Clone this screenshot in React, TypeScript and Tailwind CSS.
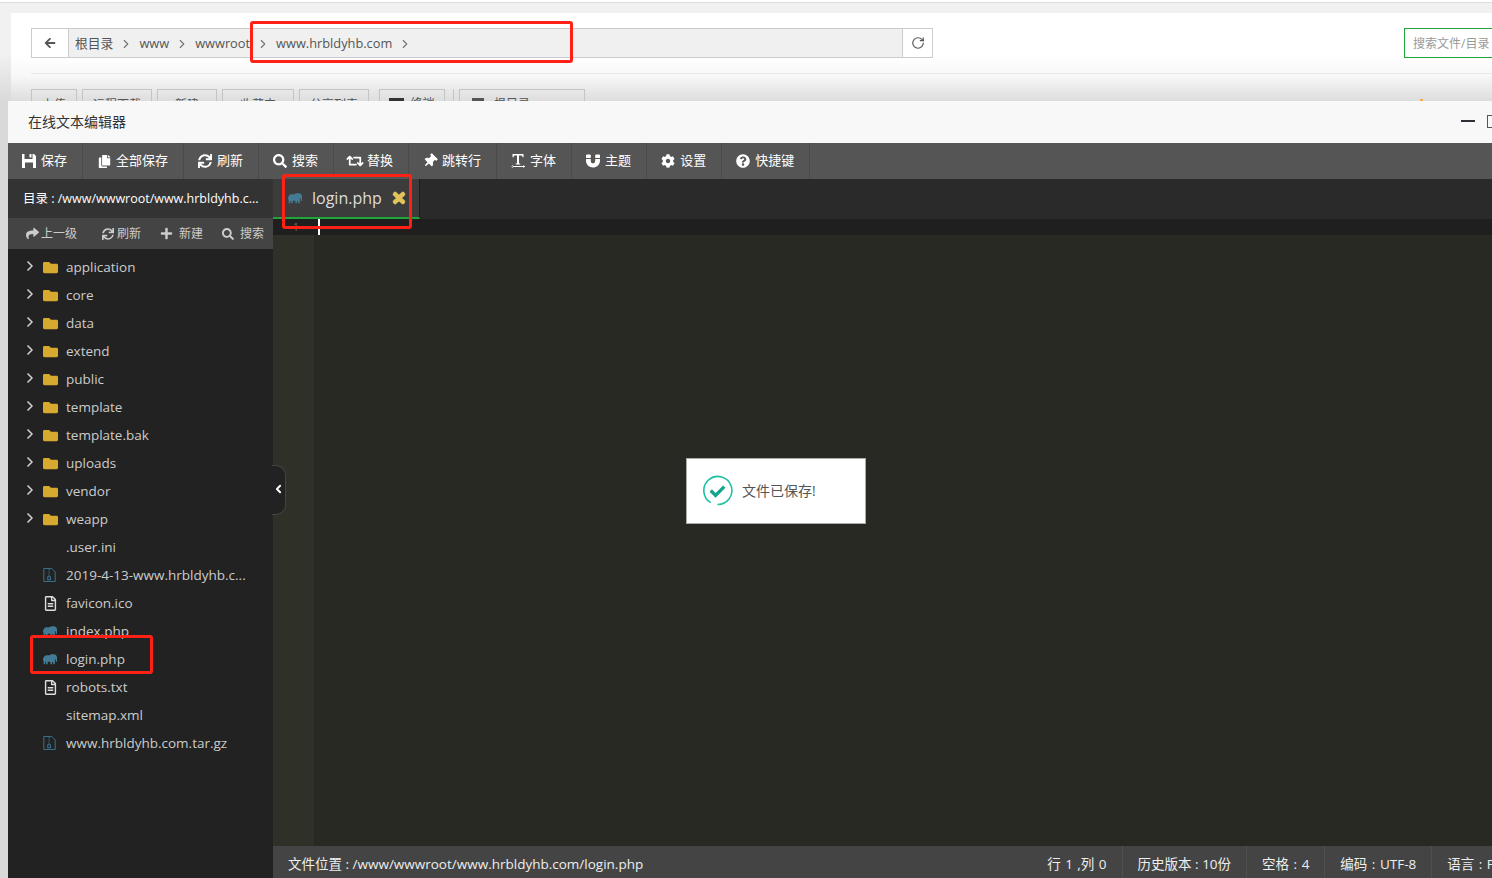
import { ChevronLeft, ChevronRight, RotateCw } from 'lucide-react';
import type { ReactNode } from 'react';
import {
    FaArrowLeft,
    FaCog,
    FaCopy,
    FaFolder,
    FaMagnet,
    FaPlus,
    FaQuestionCircle,
    FaRegFileAlt,
    FaRetweet,
    FaSearch,
    FaShare,
    FaSync,
    FaThumbtack,
    FaTimes,
} from 'react-icons/fa';

const Elephant = ({ className }: { className?: string }) => (
    <svg viewBox="0 0 16 12" className={className} fill="#437a95">
        <path d="M1 3.4C1.2 1.8 2.6 1 4 1h3.6C8.2.4 9 0 10 0h2.4C14.4 0 16 1.6 16 3.6v4.2c0 .7-.3 1.1-.8 1.1-.4 0-.7-.4-.7-1V5.8h-.9v5.7h-1.9V9h-1.4v2.5H8.4V8.6H5.4v2.9H3.5V8.8h-.9v2.7H.7V6.4L0 8V5.4c0-.9.4-1.6 1-2z" />
    </svg>
);

const ZipFile = () => (
    <svg viewBox="0 0 14 16" className="h-[14px] w-[13px]" fill="none" stroke="#3f7f9c" strokeWidth="1">
        <path d="M.5.5h9l4 4v11H.5z" />
        <path d="M6.5 1v2M6.5 4v2M6.5 7v2" />
        <rect x="5" y="10" width="3" height="3.5" />
    </svg>
);

const Floppy = () => (
    <svg viewBox="0 0 14 14" className="size-[14px]" fill="currentColor">
        <path d="M0 0h2.5v5h8V0H12l2 2v12H0zM3 14h8V8.5H3zM7.5 0h2v3.5h-2z" fillRule="evenodd" />
    </svg>
);

const TextSize = () => (
    <svg viewBox="0 0 14 14" className="size-[14px]" fill="currentColor">
        <path d="M1.5 0h11v3.2h-1L11 1.5H8v8h1.2v1H4.8v-1H6v-8H3l-.5 1.7h-1z" />
        <path d="M0 12h14v.9H0zM1.8 11l-1.8 1.45 1.8 1.45zM12.2 11l1.8 1.45-1.8 1.45z" />
    </svg>
);

const tools: { icon: ReactNode; label: string }[] = [
    { icon: <Floppy />, label: '保存' },
    { icon: <FaCopy />, label: '全部保存' },
    { icon: <FaSync className="text-[14px]" />, label: '刷新' },
    { icon: <FaSearch className="text-[14px]" />, label: '搜索' },
    { icon: <FaRetweet className="scale-125 text-[14px]" />, label: '替换' },
    { icon: <FaThumbtack className="rotate-45 text-[14px]" />, label: '跳转行' },
    { icon: <TextSize />, label: '字体' },
    { icon: <FaMagnet className="text-[14px]" />, label: '主题' },
    { icon: <FaCog className="text-[14px]" />, label: '设置' },
    { icon: <FaQuestionCircle className="text-[14px]" />, label: '快捷键' },
];

const folders = ['application', 'core', 'data', 'extend', 'public', 'template', 'template.bak', 'uploads', 'vendor', 'weapp'];

const files: { name: string; icon?: ReactNode }[] = [
    { name: '.user.ini' },
    { name: '2019-4-13-www.hrbldyhb.c...', icon: <ZipFile /> },
    { name: 'favicon.ico', icon: <FaRegFileAlt className="text-[15px] text-[#ddd]" /> },
    { name: 'index.php', icon: <Elephant className="h-[11px] w-[14px]" /> },
    { name: 'login.php', icon: <Elephant className="h-[11px] w-[14px]" /> },
    { name: 'robots.txt', icon: <FaRegFileAlt className="text-[15px] text-[#ddd]" /> },
    { name: 'sitemap.xml' },
    { name: 'www.hrbldyhb.com.tar.gz', icon: <ZipFile /> },
];

const crumbs = ['根目录', 'www', 'wwwroot', 'www.hrbldyhb.com'];
const pageButtons = [
    { label: '上传', w: 'w-[46px]' },
    { label: '远程下载', w: 'w-[70px]' },
    { label: '新建', w: 'w-[60px]' },
    { label: '收藏夹', w: 'w-[72px]' },
    { label: '分享列表', w: 'w-[70px]' },
];
const statusItems = [
    { label: '行 1 ,列 0', spacing: '[word-spacing:1px]' },
    { label: '历史版本 : 10份', spacing: '' },
    { label: '空格 : 4', spacing: '[word-spacing:1px]' },
    { label: '编码 : UTF-8', spacing: '[word-spacing:1px]' },
    { label: '语言 : PHP', spacing: '[word-spacing:1px]' },
];

export default function App() {
    return (
        <div className="relative h-[878px] w-[1492px] overflow-hidden bg-[#d9d9d9] font-['Open_Sans','Noto_Sans_CJK_SC',sans-serif]">
            <div className="h-[133px] bg-[linear-gradient(to_bottom,#f1f1f1_0%,#f1f1f1_40%,#d9d9d9_76%)]">
                <div className="h-[3px] border-b border-[#ddd] bg-white" />
                <div className="ml-[11px] mt-[10px] h-[120px] bg-[linear-gradient(to_bottom,#ffffff_0%,#ffffff_35%,#f8f8f8_52%,#dcdcdc_74%)] pl-[20px]">
                    <div className="flex items-start pt-[15px]">
                        <div className="flex h-[30px] w-[902px] shrink-0 border border-[#ccc] bg-[#f0f0f0]">
                            <div className="flex w-[37px] items-center justify-center border-r border-[#ccc] bg-white text-[12px] text-[#555]">
                                <FaArrowLeft />
                            </div>
                            <div className="flex flex-1 items-center pl-[6px] pt-px text-[12.8px] text-[#555]">
                                {crumbs.map((crumb) => (
                                    <span key={crumb} className="flex items-center">
                                        {crumb}
                                        <ChevronRight className="mx-[6px] size-[14px] text-[#777]" />
                                    </span>
                                ))}
                            </div>
                            <div className="flex w-[30px] items-center justify-center border-l border-[#ccc] bg-white text-[#555]">
                                <RotateCw className="size-[14px]" />
                            </div>
                        </div>
                        <div className="ml-[471px] flex h-[30px] w-[110px] shrink-0 items-center border border-[#20a53a] bg-white pl-[8px] pt-px text-[12px] text-[#999]">
                            搜索文件/目录
                        </div>
                    </div>
                    <div className="mt-[15px] h-px bg-[#e8e8e8]" />
                    <div className="mt-[15px] flex gap-[5px]">
                        {pageButtons.map((button) => (
                            <div key={button.label} className={`h-[30px] border border-[#c4c4c4] pt-[6px] text-center text-[12px] text-[#555] ${button.w}`}>
                                {button.label}
                            </div>
                        ))}
                        <div className="ml-[5px] flex h-[30px] w-[66px] justify-center gap-[6px] border border-[#c4c4c4] pt-[8px] text-[12px] leading-none text-[#555]">
                            <span className="h-[12px] w-[15px] bg-[#333]" />
                            <span>终端</span>
                        </div>
                        <div className="ml-[3px] h-[30px] w-px bg-[#c4c4c4]" />
                        <div className="flex h-[30px] w-[126px] gap-[10px] border border-[#c4c4c4] pl-[12px] pt-[8px] text-[12px] leading-none text-[#555]">
                            <span className="h-[12px] w-[12px] bg-[#555]" />
                            <span>根目录</span>
                        </div>
                    </div>
                </div>
            </div>
            <div className="absolute left-[1420px] top-[99px] h-[2px] w-[3px] bg-[#f0ad4e]" />

            <div className="absolute left-[8px] top-[101px] flex h-[781px] w-[1520px] flex-col">
                <div className="flex h-[42px] shrink-0 items-center justify-between bg-[#f8f8f8] pb-[2px] pl-[20px] pr-[26px] text-[14px] text-[#333]">
                    <span>在线文本编辑器</span>
                    <div className="flex items-center gap-[12px]">
                        <div className="h-[2px] w-[14px] bg-[#2f2f3a]" />
                        <div className="h-[13px] w-[15px] border border-[#555]" />
                    </div>
                </div>
                <div className="flex h-[36px] shrink-0 bg-[#555] text-[13px] text-white">
                    {tools.map((tool) => (
                        <div key={tool.label} className="flex items-center gap-[5px] border-r border-[#4a4a4a] pl-[14px] pr-[15px]">
                            <span className="flex w-[14px] justify-center">{tool.icon}</span>
                            <span>{tool.label}</span>
                        </div>
                    ))}
                </div>
                <div className="flex min-h-0 flex-1">
                    <aside className="w-[265px] shrink-0 bg-[#222]">
                        <div className="flex h-[39px] items-center truncate bg-[#333] pl-[15px] pt-px text-[12.5px] text-white">
                            目录 : /www/wwwroot/www.hrbldyhb.c...
                        </div>
                        <div className="flex h-[31px] items-center bg-[#444] pl-[18px] text-[12px] text-[#ccc]">
                            <span className="flex w-[76px] items-center gap-[2px]"><FaShare className="text-[13px]" />上一级</span>
                            <span className="flex w-[58px] items-center gap-[3px]"><FaSync className="text-[12px]" />刷新</span>
                            <span className="flex w-[62px] items-center gap-[6px]"><FaPlus className="text-[13px]" />新建</span>
                            <span className="flex items-center gap-[6px]"><FaSearch className="text-[12px]" />搜索</span>
                        </div>
                        <div className="pt-[4px] text-[13.5px] text-[#ccc]">
                            {folders.map((name) => (
                                <div key={name} className="flex h-[28px] items-center">
                                    <ChevronRight className="ml-[14px] size-[16px] -translate-y-px text-[#ccc]" strokeWidth={2.5} />
                                    <FaFolder className="ml-[5px] text-[15px] text-[#d8a92f]" />
                                    <span className="ml-[8px]">{name}</span>
                                </div>
                            ))}
                            {files.map((file) => (
                                <div key={file.name} className="flex h-[28px] items-center pl-[35px]">
                                    <span className="flex w-[23px] items-center">{file.icon}</span>
                                    <span>{file.name}</span>
                                </div>
                            ))}
                        </div>
                    </aside>
                    <main className="flex min-w-0 flex-1 flex-col bg-[#282923]">
                        <div className="flex h-[40px] shrink-0 bg-[#2a2a2a]">
                            <div className="flex w-[147px] items-center border-b-2 border-r border-b-[#20a53a] border-r-[#1c1c1c] bg-[#3c3c3c] pl-[15px] text-[16px] text-[#ddd]">
                                <Elephant className="h-[11px] w-[14px]" />
                                <span className="ml-[10px]">login.php</span>
                                <FaTimes className="ml-[9px] text-[16px] text-[#e2c35a] [&_path]:stroke-[#e2c35a] [&_path]:stroke-[50px]" />
                            </div>
                        </div>
                        <div className="flex min-h-0 flex-1">
                            <div className="w-[41px] shrink-0 bg-[#2f3129] text-center text-[11px] text-[#666]">
                                <div className="h-[16px] bg-[#1f1f1f] pl-[5px] leading-[16px]">1</div>
                            </div>
                            <div className="flex-1">
                                <div className="h-[16px] bg-[#1f1f1f] pl-[4px]">
                                    <div className="h-[16px] w-[2px] bg-white" />
                                </div>
                            </div>
                        </div>
                        <div className="flex h-[36px] shrink-0 items-center justify-between bg-[#444] pl-[15px] text-[13.5px] text-[#eee]">
                            <span>文件位置 : /www/wwwroot/www.hrbldyhb.com/login.php</span>
                            <div className="flex h-full">
                                {statusItems.map((item) => (
                                    <div key={item.label} className={`flex items-center whitespace-nowrap border-l border-[#505050] px-[15px] first:border-l-0 ${item.spacing}`}>
                                        {item.label}
                                    </div>
                                ))}
                            </div>
                        </div>
                    </main>
                </div>
            </div>

            <div className="absolute left-[272px] top-[465px] flex h-[50px] w-[14px] items-center rounded-r-[10px] border border-l-0 border-[#444] bg-[#222] text-white">
                <ChevronLeft className="size-[14px] -translate-y-px" strokeWidth={3.5} />
            </div>

            <div className="absolute left-[686px] top-[458px] flex h-[66px] w-[180px] items-center border border-[#aaa] bg-white pb-[2px] pl-[15px] text-[14px] text-[#555]">
                <svg viewBox="0 0 32 32" className="size-[31px]" fill="none">
                    <path d="M9 28.5A14.5 14.5 0 1 1 16 30.5" stroke="#1dbfa5" strokeWidth="1.6" />
                    <path d="M9 16l5 5 9-9" stroke="#12a48c" strokeWidth="3.4" />
                </svg>
                <span className="ml-[9px]">文件已保存!</span>
            </div>

            <div className="absolute left-[250px] top-[21px] h-[42px] w-[323px] rounded-[3px] border-[3px] border-[#ff2016]" />
            <div className="absolute left-[282px] top-[174px] h-[55px] w-[130px] rounded-[3px] border-[3px] border-[#ff2016]" />
            <div className="absolute left-[30px] top-[635px] h-[39px] w-[123px] rounded-[3px] border-[3px] border-[#ff2016]" />
        </div>
    );
}
